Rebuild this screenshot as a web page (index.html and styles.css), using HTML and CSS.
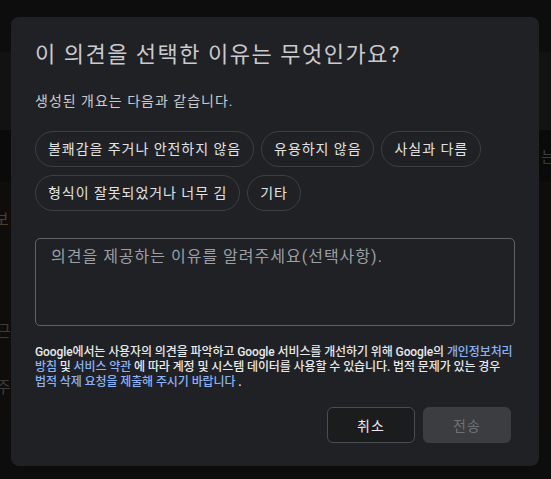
FILE: index.html
```html
<!DOCTYPE html>
<html lang="ko">
<head>
<meta charset="utf-8">
<title>의견</title>
<link rel="stylesheet" href="styles.css">
</head>
<body>
<div class="backdrop">
  <div class="bg-band bg-band-top"></div>
  <div class="bg-band bg-band-dark"><span class="bg-text bg-text-right">는</span></div>
  <div class="bg-band bg-band-brown">
    <span class="bg-text bg-left-1">보</span>
    <span class="bg-text bg-left-2">근</span>
    <span class="bg-text bg-left-3">주</span>
  </div>
</div>
<div class="dialog" role="dialog">
  <h1 class="title">이 의견을 선택한 이유는 무엇인가요?</h1>
  <p class="subtitle">생성된 개요는 다음과 같습니다.</p>
  <div class="chips">
    <button class="chip">불쾌감을 주거나 안전하지 않음</button>
    <button class="chip">유용하지 않음</button>
    <button class="chip">사실과 다름</button>
    <button class="chip">형식이 잘못되었거나 너무 김</button>
    <button class="chip">기타</button>
  </div>
  <textarea class="comment" placeholder="의견을 제공하는 이유를 알려주세요(선택사항)."></textarea>
  <p class="legal">Google에서는 사용자의 의견을 파악하고 Google 서비스를 개선하기 위해 Google의 <a href="#">개인정보처리방침</a> 및 <a href="#">서비스 약관</a> 에 따라 계정 및 시스템 데이터를 사용할 수 있습니다. 법적 문제가 있는 경우 <a href="#" class="keep">법적 삭제 요청을 제출해 주시기 바랍니다</a> .</p>
  <div class="actions">
    <button class="btn btn-cancel">취소</button>
    <button class="btn btn-send" disabled>전송</button>
  </div>
</div>
</body>
</html>
```

FILE: styles.css
```css
html, body {
  margin: 0;
  padding: 0;
}
body {
  width: 551px;
  height: 479px;
  background: #0d0d0d;
  position: relative;
  overflow: hidden;
  font-family: Roboto, "Noto Sans CJK KR", "Noto Sans", sans-serif;
}
.backdrop {
  position: absolute;
  inset: 0;
}
.bg-band {
  position: absolute;
  left: 0;
  right: 0;
}
.bg-band-top {
  top: 52px;
  height: 78px;
  background: #111211;
}
.bg-band-dark {
  top: 130px;
  height: 52px;
  background: #0a0a0a;
}
.bg-band-brown {
  top: 182px;
  height: 240px;
  background: #0f0d0b;
}
.bg-text {
  position: absolute;
  color: #3a3a3a;
  font-size: 16px;
  line-height: 16px;
}
.bg-text-right { left: 541px; top: 20px; }
.bg-left-1 { left: -6px; top: 30px; color: #4a3f35; }
.bg-left-2 { left: -4px; top: 142px; }
.bg-left-3 { left: -4px; top: 198px; }

.dialog {
  position: absolute;
  left: 11px;
  top: 17px;
  width: 528px;
  height: 449px;
  box-sizing: border-box;
  padding: 24px 24px 23px;
  background: #202124;
  border-radius: 8px;
  display: flex;
  flex-direction: column;
}
.title {
  margin: 0;
  font-size: 22px;
  line-height: 28px;
  font-weight: 400;
  letter-spacing: 1.5px;
  color: #c9cbce;
}
.subtitle {
  margin: 22px 0 0;
  font-size: 14px;
  line-height: 20px;
  letter-spacing: 1px;
  color: #c9cbce;
}
.chips {
  margin-top: 20px;
  display: flex;
  flex-wrap: wrap;
  column-gap: 7px;
  row-gap: 8px;
}
.chip {
  height: 36px;
  padding: 0 12px;
  border: 1px solid #3c4043;
  border-radius: 18px;
  background: transparent;
  color: #e3e3e3;
  font-family: inherit;
  font-size: 14px;
  line-height: 20px;
  letter-spacing: 0.95px;
}
.comment {
  margin: 27px 0 0;
  height: 88px;
  box-sizing: border-box;
  resize: none;
  padding: 7px 15px;
  border: 1px solid #5f6368;
  border-radius: 5px;
  background: transparent;
  color: #e8eaed;
  font-family: inherit;
  font-size: 16px;
  line-height: 22px;
  letter-spacing: 1px;
}
.comment::placeholder {
  color: #9aa0a6;
}
.legal {
  margin: 19px 0 0;
  font-size: 12px;
  line-height: 15px;
  font-weight: 500;
  letter-spacing: -0.1px;
  color: #e8eaed;
}
.legal a {
  color: #8ab4f8;
  text-decoration: none;
}
.legal a.keep {
  word-break: keep-all;
}
.actions {
  margin-top: auto;
  margin-right: 4px;
  display: flex;
  justify-content: flex-end;
  gap: 8px;
}
.btn {
  width: 88px;
  height: 36px;
  border-radius: 6px;
  font-family: inherit;
  font-size: 14px;
  letter-spacing: 1px;
  padding: 0;
}
.btn-cancel {
  background: #1b1c1e;
  border: 1px solid #4a4d51;
  color: #e8eaed;
}
.btn-send {
  background: #3c3d40;
  border: none;
  color: #6f7276;
}
```
